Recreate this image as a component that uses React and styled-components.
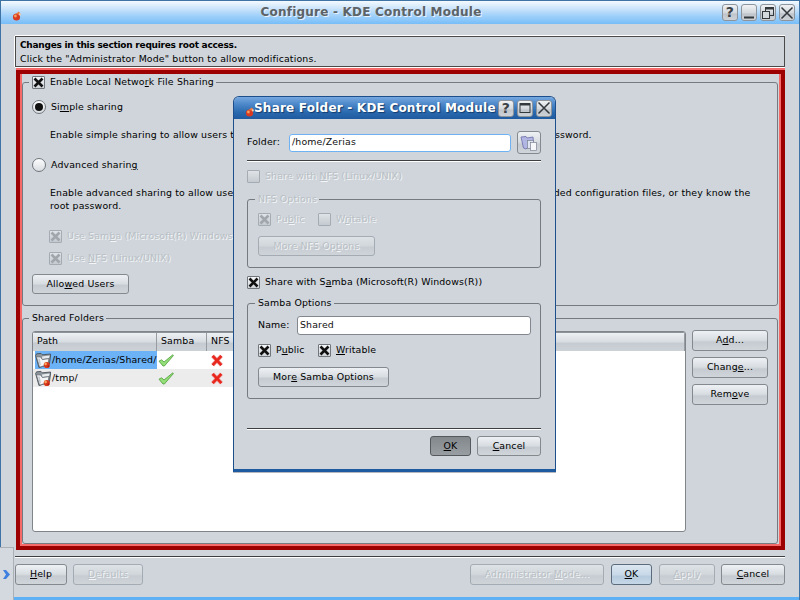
import React from 'react';
import styled, { createGlobalStyle, css } from 'styled-components';

const Global = createGlobalStyle`
  html, body {
    margin: 0;
    width: 800px;
    height: 600px;
    overflow: hidden;
    background: #cfd5db;
  }
  * { box-sizing: border-box; }
`;

const dimmed = css`
  color: #b9bfc5;
  text-shadow: 1px 1px 0 #f4f6f7;
`;

const Win = styled.div`
  position: relative;
  width: 800px;
  height: 600px;
  display: flex;
  flex-direction: column;
  border: 1px solid #3d73a5;
  border-bottom-width: 0;
  background: #cfd5db;
  color: #000;
  font-family: "DejaVu Sans", sans-serif;
  font-size: 9.4px;
  letter-spacing: 0.15px;
  line-height: 13px;
`;

const TitleBar = styled.div`
  flex: none;
  height: 23px;
  display: flex;
  align-items: center;
  padding: 0 4px 0 11px;
  background: linear-gradient(#f4faff 0%, #cfe6fb 30%, #9fd0fa 65%, #77bdf8 100%);
`;

const TitleText = styled.div`
  flex: 1;
  text-align: center;
  padding-right: 2px;
  font-size: 12px;
  letter-spacing: 0.22px;
  font-weight: bold;
  color: #5d6266;
  text-shadow: 1px 1px 0 #e8f3fd;
  white-space: nowrap;
`;

const TitleButtons = styled.div`
  display: flex;
  gap: 3px;
`;

const TitleButton = styled.div`
  width: 16px;
  height: 17px;
  display: flex;
  align-items: center;
  justify-content: center;
  border: 1px solid #8d949b;
  border-radius: 3px;
  background: linear-gradient(#f0f2f4, #d4d9dd 50%, #bfc5cb 60%, #cdd2d7);
  color: #3c4146;
  font-size: 14px;
  font-weight: bold;
`;

const Main = styled.div`
  flex: 1;
  display: flex;
  flex-direction: column;
  padding: 11px 14px 0;
  border-bottom: 3px solid #5eb1f5;
`;

const Notice = styled.div`
  height: 31px;
  margin-top: 1px;
  padding: 2px 4px;
  border: 1px solid #4a4a4a;
  box-shadow: 0 -1px 0 #fff, 0 1px 0 #fff, -1px 0 0 #fff;
  line-height: 13px;
`;

const Strong = styled.div`
  font-size: 9px;
  letter-spacing: -0.25px;
  font-weight: bold;
`;

const RedFrame = styled.div`
  height: 480px;
  margin: 3px 0 0 1px;
  padding: 1px 3px 2px 2px;
  display: flex;
  flex-direction: column;
  border: 4px solid #9c0000;
  box-shadow: 0 -2px 0 #f76a6a, inset 2px 0 0 #f76a6a, inset -2px 0 0 #f76a6a, inset 0 -2px 0 #f76a6a;
`;

const Group = styled.fieldset`
  margin: ${p => p.$top || 0}px 0 0;
  padding: ${p => p.$padTop || 0}px 9px 0 ${p => p.$padLeft || 9}px;
  height: ${p => p.$height}px;
  min-width: 0;
  border: 1px solid #747a80;
  border-radius: 3px;
`;

const Legend = styled.legend`
  display: flex;
  align-items: center;
  gap: 5px;
  height: 14px;
  margin-left: -3px;
  padding: 0 2px 0 3px;
  line-height: 14px;
  white-space: nowrap;
  ${p => p.$disabled && dimmed}
`;

const Row = styled.div`
  display: flex;
  align-items: center;
  gap: ${p => p.$gap || 5}px;
  height: ${p => p.$height || 13}px;
  margin-top: ${p => p.$top || 0}px;
  margin-left: ${p => p.$left || 0}px;
  white-space: nowrap;
`;

const Caption = styled.span`
  margin-top: -2px;
  ${p => p.$disabled && dimmed}
  ${p => p.$width && `width: ${p.$width}px;`}
`;

const Desc = styled.div`
  margin: ${p => p.$top}px 0 0 18px;
  white-space: nowrap;
`;

const Box = styled.span`
  flex: none;
  display: flex;
  align-items: center;
  justify-content: center;
  width: 13px;
  height: 13px;
  border: 1px solid ${p => (p.$disabled ? '#a4abb2' : '#70767c')};
  border-radius: 1px;
  background: ${p => (p.$disabled ? 'linear-gradient(#dfe3e7, #c4cad0)' : 'linear-gradient(#f5f6f8, #cfd4d9)')};
  color: ${p => (p.$disabled ? '#a0a6ac' : '#111')};
`;

const RadioRing = styled.span`
  flex: none;
  display: flex;
  align-items: center;
  justify-content: center;
  width: 14px;
  height: 14px;
  border: 1px solid #70767c;
  border-radius: 50%;
  background: linear-gradient(#fdfdfe, #d9dde1);
`;

const RadioDot = styled.span`
  width: 8px;
  height: 8px;
  border-radius: 50%;
  background: #111;
`;

const Btn = styled.div`
  flex: none;
  display: flex;
  align-items: center;
  justify-content: center;
  width: ${p => p.$width}px;
  height: ${p => p.$height || 20}px;
  margin-top: ${p => p.$top || 0}px;
  margin-left: ${p => p.$left || 0}px;
  padding-bottom: 2px;
  border: 1px solid #84898f;
  border-radius: 3px;
  white-space: nowrap;
  background: linear-gradient(#eef1f4 0%, #d8dde2 48%, #c5cbd1 58%, #d0d5da 100%);
  ${p => p.$disabled && css`
    ${dimmed}
    border-color: #a4abb2;
    background: linear-gradient(#dde2e7 0%, #d2d7dc 48%, #c6ccd2 58%, #cfd4d9 100%);
  `}
  ${p => p.$focus && css`
    border-color: #5c6c7c;
    background: linear-gradient(#dbe6f0 0%, #c9d9e8 50%, #b7cbde 60%, #c6d8e8 100%);
  `}
  ${p => p.$pressed && css`
    border-color: #55595e;
    background: linear-gradient(#83888d, #999ea3);
  `}
`;

const ListRow = styled.div`
  display: flex;
  gap: 6px;
  margin-top: 5px;
`;

const Tree = styled.div`
  width: 654px;
  height: 201px;
  margin-top: 1px;
  border: 1px solid #7f858b;
  border-radius: 3px;
  background: #fff;
  overflow: hidden;
`;

const TreeHead = styled.div`
  display: flex;
  height: 19px;
  border-top: 1px solid #8c9299;
  background: linear-gradient(#edf0f3 0%, #d8dde2 48%, #c5cbd1 58%, #cdd2d7 100%);
`;

const HeadCell = styled.div`
  width: ${p => p.$width}px;
  ${p => p.$grow && 'flex: 1;'}
  padding: 1px 0 0 4px;
  border-right: 1px solid #969ca2;
`;

const TreeLine = styled.div`
  display: flex;
  height: 18px;
`;

const Cell = styled.div`
  flex: none;
  display: flex;
  align-items: center;
  overflow: hidden;
  width: ${p => p.$width}px;
  padding-left: ${p => p.$pad || 0}px;
  background: ${p => p.$bg || 'transparent'};
  white-space: nowrap;
`;

const SideButtons = styled.div`
  display: flex;
  flex-direction: column;
  gap: 6px;
`;

const Rule = styled.div`
  flex: none;
  height: 2px;
  margin-top: ${p => p.$top}px;
  background: linear-gradient(#3c3f42 50%, #fff 50%);
`;

const Footer = styled.div`
  display: flex;
  gap: 6px;
  margin-top: ${p => p.$top || 6}px;
`;

const Spacer = styled.div`
  flex: 1;
`;

const SideTab = styled.div`
  position: absolute;
  left: -1px;
  top: 546px;
  width: 14px;
  height: 54px;
  display: flex;
  align-items: center;
  justify-content: center;
  padding-left: 0;
  background: #d3d9de;
  border-top: 1px solid #aab0b6;
  border-right: 1px solid #aab0b6;
`;

const Dialog = styled.div`
  position: absolute;
  left: 232px;
  top: 95px;
  width: 323px;
  height: 376px;
  display: flex;
  flex-direction: column;
  border: 1px solid #1c4f8b;
  border-bottom: 3px solid #1e5aa0;
  border-radius: 6px 6px 0 0;
  background: #cfd5db;
  box-shadow: 0 1px 0 rgba(40, 50, 60, 0.35);
`;

const DialogBar = styled.div`
  flex: none;
  height: 22px;
  display: flex;
  align-items: center;
  padding: 0 3px 0 11px;
  border-radius: 5px 5px 0 0;
  background: linear-gradient(#76a8e0 0%, #4a86c8 35%, #2a69ae 70%, #1f5a9f 100%);
`;

const DialogTitle = styled.div`
  flex: 1;
  overflow: hidden;
  min-width: 0;
  margin: 0 2px 0 0;
  text-indent: -1px;
  font-size: 12px;
  letter-spacing: 0.22px;
  font-weight: bold;
  color: #fff;
  text-shadow: 1px 1px 1px #123a6c;
  white-space: nowrap;
`;

const DialogBody = styled.div`
  flex: 1;
  display: flex;
  flex-direction: column;
  padding: 12px 14px 0 13px;
`;

const Field = styled.div`
  flex: ${p => (p.$grow ? 1 : 'none')};
  height: ${p => p.$height}px;
  display: flex;
  align-items: center;
  padding: 0 0 2px 2px;
  background: #fff;
  border: 1px solid ${p => (p.$focus ? '#6fb2f2' : '#82888e')};
  border-radius: 3px;
  color: #111;
`;

const FolderRow = styled.div`
  display: flex;
  align-items: center;
  height: 23px;
  gap: 6px;
`;

const BrowseBtn = styled(Btn)`
  width: 24px;
  height: 23px;
  padding-bottom: 0;
`;

const Logo = () => (
  <svg width="10" height="10" viewBox="0 0 10 10" style={{ flex: 'none', marginTop: 7 }}>
    <circle cx="4.5" cy="6" r="3.6" fill="#d93a22" />
    <circle cx="3.4" cy="5" r="1.4" fill="#f2a05e" />
    <path d="M4 3 L6.5 .6 L8.5 2.2 L6.5 3.6 Z" fill="#ec7d3c" />
    <circle cx="7.8" cy="3.4" r="1.1" fill="#f6c9a8" />
  </svg>
);

const CloseGlyph = () => (
  <svg width="14" height="14" viewBox="0 0 14 14">
    <path d="M1.5 1.5 L12.5 12.5 M12.5 1.5 L1.5 12.5" stroke="#33383d" strokeWidth="1.5" fill="none" />
  </svg>
);

const MaxGlyph = () => (
  <svg width="12" height="12" viewBox="0 0 12 12">
    <rect x="1" y="1.5" width="10" height="9" fill="none" stroke="#33383d" />
    <path d="M1 2.5 H11" stroke="#33383d" strokeWidth="2" />
  </svg>
);

const MinGlyph = () => (
  <svg width="12" height="14" viewBox="0 0 12 14">
    <path d="M1 11.5 H11" stroke="#33383d" strokeWidth="2" />
  </svg>
);

const RestoreGlyph = () => (
  <svg width="14" height="14" viewBox="0 0 14 14">
    <rect x="4.5" y="1.5" width="8" height="8" fill="none" stroke="#33383d" />
    <path d="M4.5 2.5 H12.5" stroke="#33383d" strokeWidth="2" />
    <rect x="1.5" y="5.5" width="7" height="7" fill="#d4d9dd" stroke="#33383d" />
  </svg>
);

const TickX = () => (
  <svg width="11" height="11" viewBox="0 0 11 11">
    <path d="M1.5 1.5 L9.5 9.5 M9.5 1.5 L1.5 9.5" stroke="currentColor" strokeWidth="2.6" fill="none" />
  </svg>
);

const Check = ({ on, disabled, children, width }) => (
  <>
    <Box $disabled={disabled}>{on && <TickX />}</Box>
    <Caption $disabled={disabled} $width={width}>{children}</Caption>
  </>
);

const ShareFolderIcon = () => (
  <svg width="17" height="17" viewBox="0 0 17 17" style={{ flex: 'none' }}>
    <path d="M.6 3.6 L1.6 1.8 L6 1.4 L7.4 2.8 L15.6 2 L15.4 5 L14.4 12 L4 15.6 Z" fill="#8d949c" stroke="#3f464e" strokeWidth=".8" />
    <path d="M7 4.4 L14.6 3.4 L14 6 L7.4 7 Z" fill="#e8ebee" />
    <path d="M1.4 4.8 L5.6 5 L7.4 7.6 L14 6.6 L12.8 12.6 L4.6 15.2 Z" fill="#f4f5f6" stroke="#59616a" strokeWidth=".7" />
    <path d="M3 6.4 L4.4 12.6 L6 13.4 L4.8 6.6 Z" fill="#c3c8ce" />
    <circle cx="11.8" cy="13" r="3.1" fill="#d8381c" />
    <circle cx="10.6" cy="11.9" r="1.3" fill="#f6a65c" />
    <circle cx="13.4" cy="14.2" r="1" fill="#a8200f" />
  </svg>
);

const GreenCheck = () => (
  <svg width="16" height="13" viewBox="0 0 16 13">
    <path d="M1 7.2 L3.6 5.8 L6 8 L14.8 .8 L15.4 1.6 L6.4 12 L5 12 Z" fill="#93e078" stroke="#4f9a3a" strokeWidth=".8" strokeLinejoin="round" />
  </svg>
);

const RedCross = () => (
  <svg width="12" height="13" viewBox="0 0 12 13">
    <path d="M1.6 1.8 L10.4 11.2 M10.4 1.8 L1.6 11.2" stroke="#eda2a0" strokeWidth="4" fill="none" />
    <path d="M1.6 1.8 L10.4 11.2 M10.4 1.8 L1.6 11.2" stroke="#e8261c" strokeWidth="2.6" fill="none" />
  </svg>
);

const BrowseIcon = () => (
  <svg width="18" height="18" viewBox="0 0 18 18">
    <path d="M1 3 L6 2.5 L7 4 L13 3 L13.5 8 L6 15 L3.5 14 Z" fill="#b2b6e2" stroke="#6b6ba8" strokeWidth=".8" />
    <rect x="7.5" y="6.5" width="6" height="8" fill="#dfe3f2" stroke="#7c8493" strokeWidth=".7" />
    <rect x="10.5" y="8.5" width="6" height="8" fill="#f6f7fa" stroke="#7c8493" strokeWidth=".7" />
  </svg>
);

const Arrow = () => (
  <svg width="7" height="9" viewBox="0 0 7 9">
    <path d="M0 0 L3 0 L7 4.5 L3 9 L0 9 L3 4.5 Z" fill="#3f7fe0" />
  </svg>
);

const rows = [
  { path: '/home/Zerias/Shared/', bg: '#6cb2f6', line: null },
  { path: '/tmp/', bg: '#ececec', line: '#ececec' },
];

export default function App() {
  return (
    <Win>
      <Global />
      <TitleBar>
        <Logo />
        <TitleText>Configure - KDE Control Module</TitleText>
        <TitleButtons>
          <TitleButton>?</TitleButton>
          <TitleButton><MinGlyph /></TitleButton>
          <TitleButton><RestoreGlyph /></TitleButton>
          <TitleButton><CloseGlyph /></TitleButton>
        </TitleButtons>
      </TitleBar>

      <Main>
        <Notice>
          <Strong>Changes in this section requires root access.</Strong>
          <div>Click the "Administrator Mode" button to allow modifications.</div>
        </Notice>

        <RedFrame>
          <Group $height={231} $padTop={11}>
            <Legend>
              <Box><TickX /></Box>
              <span>Enable Local Netwo<u>r</u>k File Sharing</span>
            </Legend>
            <Row $height={14}>
              <RadioRing><RadioDot /></RadioRing>
              <Caption>Si<u>m</u>ple sharing</Caption>
            </Row>
            <Desc $top={14}>Enable simple sharing to allow users to share folders from the home folder, without knowing the root password.</Desc>
            <Row $height={14} $top={17}>
              <RadioRing />
              <Caption>Advanced sharin<u>g</u></Caption>
            </Row>
            <Desc $top={14}>
              Enable advanced sharing to allow users to share any folder, as long as they have real access to the needed configuration files, or they know the
              <br />
              root password.
            </Desc>
            <Row $top={18} $left={17}>
              <Check on disabled>Use Sam<u>b</u>a (Microsoft(R) Windows(R))</Check>
            </Row>
            <Row $top={9} $left={17}>
              <Check on disabled>Use <u>N</u>FS (Linux/UNIX)</Check>
            </Row>
            <Btn $width={97} $top={9}>Allo<u>w</u>ed Users</Btn>
          </Group>

          <Group $height={233} $top={5} $padTop={0}>
            <Legend>Shared Folders</Legend>
            <ListRow>
              <Tree>
                <TreeHead>
                  <HeadCell $width={124}>Path</HeadCell>
                  <HeadCell $width={50}>Samba</HeadCell>
                  <HeadCell $width={50}>NFS</HeadCell>
                  <HeadCell $grow />
                </TreeHead>
                {rows.map(r => (
                  <TreeLine key={r.path}>
                    <Cell $width={2} $bg={r.line} />
                    <Cell $width={122} $bg={r.bg}>
                      <ShareFolderIcon />
                      <Caption>{r.path}</Caption>
                    </Cell>
                    <Cell $width={50} $pad={1} $bg={r.line}><GreenCheck /></Cell>
                    <Cell $width={50} $pad={4} $bg={r.line}><RedCross /></Cell>
                  </TreeLine>
                ))}
              </Tree>
              <SideButtons>
                <Btn $width={76} $height={21}>A<u>d</u>d...</Btn>
                <Btn $width={76} $height={21}>Chang<u>e</u>...</Btn>
                <Btn $width={76} $height={21}>Rem<u>o</u>ve</Btn>
              </SideButtons>
            </ListRow>
          </Group>
        </RedFrame>

        <Rule $top={6} />
        <Footer $top={6}>
          <Btn $width={52} $height={21}><span><u>H</u>elp</span></Btn>
          <Btn $width={70} $height={21} $disabled><span><u>D</u>efaults</span></Btn>
          <Spacer />
          <Btn $width={134} $height={21} $disabled>Administrator&nbsp;<u>M</u>ode...</Btn>
          <Btn $width={41} $height={21} $left={1} $focus><span><u>O</u>K</span></Btn>
          <Btn $width={56} $height={21} $left={1} $disabled><span><u>A</u>pply</span></Btn>
          <Btn $width={64} $height={21}><span><u>C</u>ancel</span></Btn>
        </Footer>
      </Main>

      <SideTab><Arrow /></SideTab>

      <Dialog>
        <DialogBar>
          <Logo />
          <DialogTitle>Share Folder - KDE Control Module</DialogTitle>
          <TitleButtons>
            <TitleButton>?</TitleButton>
            <TitleButton><MaxGlyph /></TitleButton>
            <TitleButton><CloseGlyph /></TitleButton>
          </TitleButtons>
        </DialogBar>
        <DialogBody>
          <FolderRow>
            <Caption $width={36}>Folder:</Caption>
            <Field $grow $focus $height={18}>/home/Zerias</Field>
            <BrowseBtn><BrowseIcon /></BrowseBtn>
          </FolderRow>
          <Rule $top={6} />
          <Row $top={8}>
            <Check disabled>Share with <u>N</u>FS (Linux/UNIX)</Check>
          </Row>
          <Group $height={76} $top={9} $padTop={7} $padLeft={10}>
            <Legend $disabled>NFS Options</Legend>
            <Row $gap={5}>
              <Check on disabled width={37}>Pu<u>b</u>lic</Check>
              <Check disabled>W<u>r</u>itable</Check>
            </Row>
            <Btn $width={117} $top={10} $disabled>More NFS Op<u>t</u>ions</Btn>
          </Group>
          <Row $top={8}>
            <Check on>Share with S<u>a</u>mba (Microsoft(R) Windows(R))</Check>
          </Row>
          <Group $height={103} $top={7} $padTop={6} $padLeft={10}>
            <Legend>Samba Options</Legend>
            <Row $height={19} $gap={6}>
              <Caption $width={33}>Name:</Caption>
              <Field $height={19} $grow>Shared</Field>
            </Row>
            <Row $top={9} $gap={5}>
              <Check on width={37}>P<u>u</u>blic</Check>
              <Check on><u>W</u>ritable</Check>
            </Row>
            <Btn $width={131} $top={10}>Mor<u>e</u>&nbsp;Samba Options</Btn>
          </Group>
          <Rule $top={29} />
          <Footer $top={6}>
            <Spacer />
            <Btn $width={41} $pressed><span><u>O</u>K</span></Btn>
            <Btn $width={64}><span><u>C</u>ancel</span></Btn>
          </Footer>
        </DialogBody>
      </Dialog>
    </Win>
  );
}
